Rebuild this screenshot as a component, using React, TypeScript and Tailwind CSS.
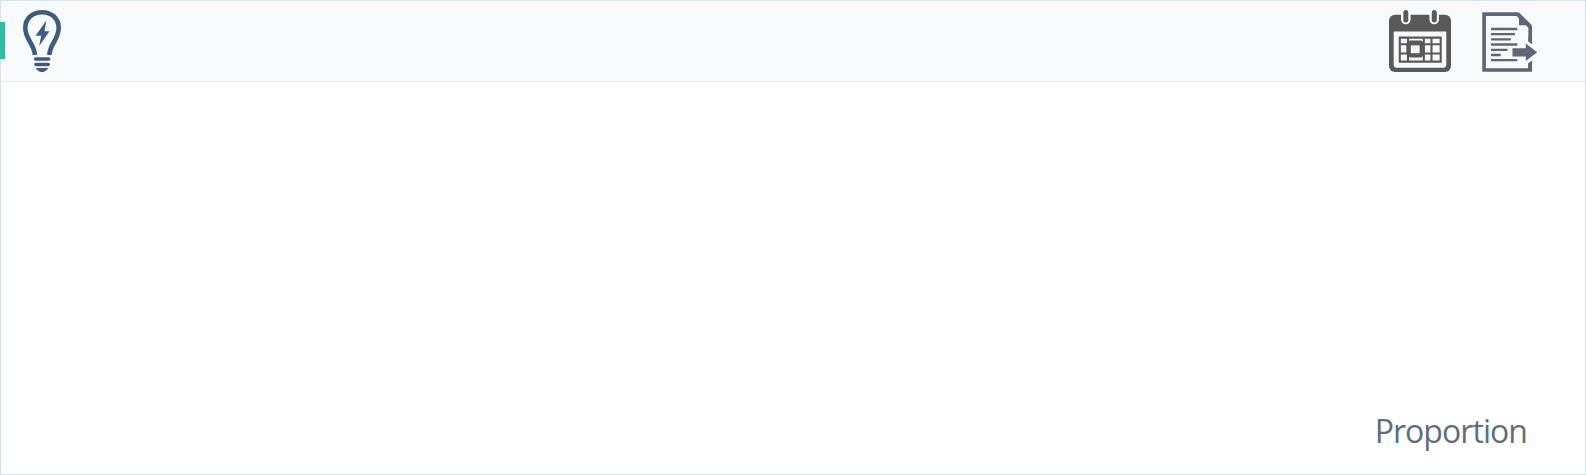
function BulbIcon() {
  return (
    <svg width="40" height="64" viewBox="22 9 40 64" fill="none">
      <path d="M34.8 55C34.6 44 25.3 40 25.3 27.8C25.3 18.5 32.5 12.3 42 12.3S58.7 18.5 58.7 27.8C58.7 40 49.6 44 49.4 55" stroke="#405b80" strokeWidth="4.6" />
      <path d="M46.3 20.5L35.6 35.7H41.2L39.2 46L49.5 31.2H44.5Z" fill="#405b80" />
      <path d="M35.6 59H48.6M36 64.5H48.2" stroke="#405b80" strokeWidth="3.6" strokeLinecap="round" />
      <path d="M35.6 68H48.6C47 69.6 45.6 72 42 72S37 69.6 35.6 68Z" fill="#405b80" />
    </svg>
  );
}

function CalendarIcon() {
  return (
    <svg width="64" height="64" viewBox="1388 9 64 64" fill="none">
      <rect x="1389" y="14.7" width="62" height="57.3" rx="6" fill="#595959" />
      <path d="M1393.7 31.5H1446.3V64.5Q1446.3 67.7 1443 67.7H1397Q1393.7 67.7 1393.7 64.5Z" fill="#f8f9fb" />
      <path d="M1401 13V19.5A4.8 4.8 0 0 0 1410.6 19.5V13ZM1429.4 13V19.5A4.8 4.8 0 0 0 1439 19.5V13Z" fill="#f8f9fb" />
      <path d="M1405.8 12.6V20M1434.3 12.6V20" stroke="#595959" strokeWidth="5" strokeLinecap="round" />
      <path d="M1399.8 37.6H1440.7V61.6H1399.8ZM1400 44.3H1440M1400 53.5H1440M1408 37V62M1423.8 37V62M1431.5 37V62" stroke="#595959" strokeWidth="2.1" />
      <rect x="1406.3" y="40.6" width="18.2" height="16.8" rx="4.5" fill="#595959" />
      <rect x="1410.8" y="45.4" width="8.8" height="7.8" fill="#f8f9fb" />
    </svg>
  );
}

function ExportIcon() {
  return (
    <svg width="56" height="61" viewBox="1482 12 56 61" fill="none">
      <path d="M1530.2 44V27L1517.3 14.2H1484.1V70H1530.2V61" stroke="#5f6677" strokeWidth="3.7" />
      <path d="M1519 12.6V25.3H1532Z" fill="#5f6677" />
      <path d="M1491 29H1517.3M1491 34.1H1515M1491 39.4H1511M1491 44.5H1517.3M1491 49.8H1507.5M1491 55H1500.7M1491 60.2H1517.3" stroke="#5f6677" strokeWidth="2.3" />
      <path d="M1526 41L1528 40.8L1534 46V59L1526 65Z" fill="#f8f9fb" />
      <path d="M1512.5 48.3H1525.8V43.5L1537.2 52.3L1525.8 61V56.5H1512.5Z" fill="#5f6677" />
      <path d="M1528.3 41.5L1532 44.3V37H1528.3ZM1528.3 63.4L1532 60.5V69H1528.3Z" fill="#5f6677" />
    </svg>
  );
}

export default function App() {
  return (
    <main className="flex h-[475px] w-[1586px] flex-col border border-[#d4e0ea] bg-white">
      <header className="flex h-[81px] shrink-0 items-start border-b border-[#e6ebf1] bg-[#f8f9fb] pr-[47px]">
        <span className="-ml-px mt-[21px] h-[37px] w-[5px] bg-[#2ebd9e]" />
        <button aria-label="Ideas" className="ml-[17px] mt-2">
          <BulbIcon />
        </button>
        <nav className="ml-auto flex items-start gap-[30px]">
          <button aria-label="Calendar" className="mt-2">
            <CalendarIcon />
          </button>
          <button aria-label="Export" className="mt-[11px]">
            <ExportIcon />
          </button>
        </nav>
      </header>
      <section className="flex flex-1 items-end justify-end pb-[23px] pr-[58px]">
        <span className="font-['Open_Sans','Noto_Sans',sans-serif] text-[32px] leading-[40px] tracking-[-0.95px] text-[#5f6e7d]">Proportion</span>
      </section>
    </main>
  );
}
